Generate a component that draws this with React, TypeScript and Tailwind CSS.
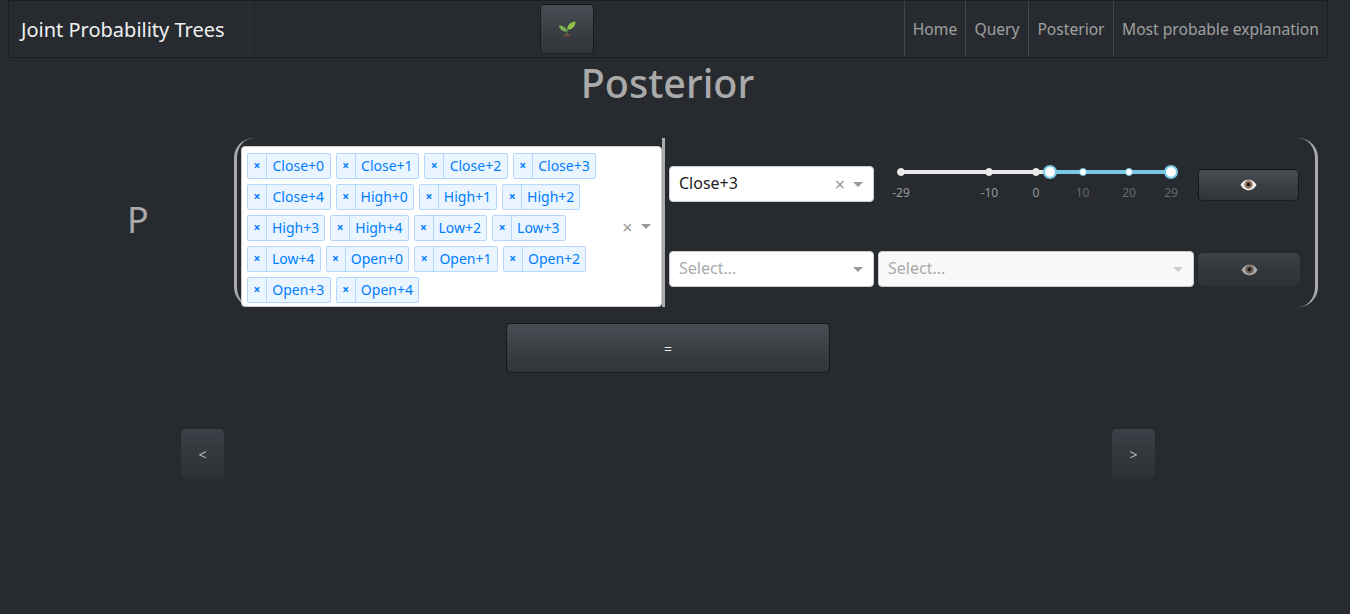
const font = "font-['Noto_Sans',sans-serif]"

const tags = [
  'Close+0', 'Close+1', 'Close+2', 'Close+3', 'Close+4',
  'High+0', 'High+1', 'High+2', 'High+3', 'High+4',
  'Low+2', 'Low+3', 'Low+4',
  'Open+0', 'Open+1', 'Open+2', 'Open+3', 'Open+4',
]

const links = [
  { label: 'Home', cls: 'w-[61px]' },
  { label: 'Query', cls: 'w-[63px]' },
  { label: 'Posterior', cls: 'w-[85px]' },
  { label: 'Most probable explanation', cls: 'flex-1' },
]

// slider scale runs from -29 to 29 over 270px
const marks = [-29, -10, 0, 10, 20, 29]
const low = 3
const toX = (v: number) => ((v + 29) / 58) * 270

function Caret({ light }: { light?: boolean }) {
  return (
    <span className={`w-0 h-0 border-x-[5px] border-x-transparent border-t-[5px] ${light ? 'border-t-[#ccc]' : 'border-t-[#999]'}`} />
  )
}

function Seedling() {
  return (
    <svg width="18" height="18" viewBox="0 0 18 18">
      <path d="M5 15.500c0-1 1.800-1.500 4-1.500s4 .5 4 1.500-1.800 1-4 1-4 0-4-1z" fill="#6b4a3a" />
      <path d="M8.600 14.500c0-3 .1-5 .9-7l.8.300c-.8 2-.8 3.800-.8 6.700z" fill="#5c913b" />
      <path d="M9 11.500C8.500 8 5.500 5.500 1 5.500 1.500 9.500 5 12 9 11.500z" fill="#77b255" />
      <path d="M9.500 9.500C9 5 12.500 1.800 17.500 1.500 17.500 6.500 14 10 9.500 9.500z" fill="#8fc24a" />
    </svg>
  )
}

function Eye() {
  return (
    <svg width="17" height="12" viewBox="0 0 17 12">
      <path d="M.5 6C3 2 5.500.8 8.500.8S14 2 16.500 6c-2.500 4-5 5.200-8 5.200S3 10 .5 6z" fill="#f1f1f1" />
      <circle cx="8.500" cy="5.500" r="4.300" fill="#9c7a60" />
      <circle cx="8.500" cy="5.500" r="1.900" fill="#1a1a1a" />
    </svg>
  )
}

function Tag({ label }: { label: string }) {
  const pad = label.startsWith('Close') ? 'px-[5.5px]' : label.startsWith('Open') ? 'px-[5.25px]' : 'px-[5px]'
  return (
    <div className="flex h-[26px] ml-[5px] mt-[5px] rounded-[2px] border border-[#b3d7ff] bg-[#ebf5ff] text-[#007eff] text-[14px] leading-[24px]">
      <span className="w-[19px] flex items-center justify-center border-r border-[#b3d7ff] text-[12px] font-bold">×</span>
      <span className={pad}>{label}</span>
    </div>
  )
}

function GradientButton({ className, children }: { className: string; children?: React.ReactNode }) {
  return (
    <button className={`flex items-center justify-center rounded-[5px] bg-gradient-to-b from-[#484e55] via-[#3a3f44] to-[#313539] ${className}`}>
      {children}
    </button>
  )
}

export default function App() {
  return (
    <div className={`min-h-screen bg-[#272b30] ${font} overflow-hidden`}>
      {/* Navbar */}
      <nav className="ml-2 w-[1320px] h-[58px] flex border border-[#1c1e22]">
        <div className="w-[241px] flex items-center pl-3 pt-[2px] border-r border-[#2f3338] text-[#f0f0f0] text-[20px]">
          Joint Probability Trees
        </div>
        <div className="flex-1 flex items-start pt-[3px] pl-[290px]">
          <GradientButton className="w-[54px] h-[50px] border border-black/60">
            <Seedling />
          </GradientButton>
        </div>
        <div className="w-[423px] flex text-[#a0a0a0] text-[15.6px]">
          {links.map((l) => (
            <div key={l.label} className={`${l.cls} flex items-center justify-center pt-[1px] border-l border-[#43474c]`}>
              {l.label}
            </div>
          ))}
        </div>
      </nav>

      <h1 className="h-[50px] mr-[15px] text-center text-[#aaaaaa] text-[39.5px] font-medium leading-[50px]">Posterior</h1>

      {/* Query row */}
      <div className="mt-[30px] flex h-[169px]">
        <div className="w-[234px] pl-[127px] pt-[52px] text-[#aaaaaa] text-[36px] leading-[60px]">P</div>

        <div className="w-[431px] rounded-l-[20px] border-l-[3px] border-r-[3px] border-[#aaaaaa] py-2 pl-1">
          <div className="w-[421px] h-[161px] flex items-center bg-white rounded-[4px] border border-[#ccc]">
            <div className="w-[375px] flex flex-wrap items-start content-start pb-[2px]">
              {tags.map((t) => <Tag key={t} label={t} />)}
            </div>
            <span className="ml-[2px] w-[17px] text-center text-[#999] text-[18px] leading-none">×</span>
            <span className="ml-[5px] flex"><Caret /></span>
          </div>
        </div>

        <div className="w-[653px] rounded-r-[20px] border-r-[3px] border-[#aaaaaa] pl-1 pt-[28px]">
          <div className="flex items-start">
            <div className="w-[205px] h-[36px] flex items-center bg-white rounded-[4px] border border-[#ccc] pl-[9px] pr-[10px] pb-[2px] text-[16px] text-[#222]">
              <span className="flex-1">Close+3</span>
              <span className="text-[#999] text-[18px] leading-none mr-[8px] mt-[2px]">×</span>
              <span className="flex mt-[2px]"><Caret /></span>
            </div>
            <div className="relative w-[270px] h-[36px] ml-[27px]">
              <div className="absolute left-0 top-[4px] w-full h-[4px] rounded-full bg-[#e9e9e9]" />
              <div className="absolute top-[4px] h-[4px] bg-[#78c8e6]" style={{ left: toX(low), right: 0 }} />
              {marks.map((m) => (
                <span key={m}>
                  <span
                    className={`absolute top-[2px] w-[8px] h-[8px] -ml-[4px] rounded-full border ${m >= low ? 'bg-white border-[#78c8e6]' : 'bg-[#e9e9e9] border-[#e9e9e9]'}`}
                    style={{ left: toX(m) }}
                  />
                  <span
                    className={`absolute top-[20px] -translate-x-1/2 text-[12px] leading-[14px] ${m <= 0 ? 'text-[#999]' : 'text-[#666]'}`}
                    style={{ left: toX(m) }}
                  >
                    {m}
                  </span>
                </span>
              ))}
              {[low, 29].map((v) => (
                <span
                  key={v}
                  className="absolute -top-[1px] w-[14px] h-[14px] -ml-[7px] rounded-full bg-white border-2 border-[#78c8e6]"
                  style={{ left: toX(v) }}
                />
              ))}
            </div>
            <GradientButton className="w-[101px] h-[32px] ml-[27px] mt-[3px] border border-black/60">
              <Eye />
            </GradientButton>
          </div>

          <div className="flex items-start mt-[49px]">
            <div className="w-[205px] h-[36px] flex items-center bg-white rounded-[4px] border border-[#ccc] pl-[9px] pr-[10px] text-[16px] text-[#aaa]">
              <span className="flex-1 pb-[2px]">Select...</span>
              <Caret />
            </div>
            <div className="w-[316px] h-[36px] ml-[4px] flex items-center bg-[#f9f9f9] rounded-[4px] border border-[#ccc] pl-[9px] pr-[10px] text-[16px] text-[#aaa]">
              <span className="flex-1 pb-[2px]">Select...</span>
              <Caret light />
            </div>
            <GradientButton className="w-[102px] h-[33px] ml-[4px] mt-[2px] opacity-65">
              <Eye />
            </GradientButton>
          </div>
        </div>
      </div>

      <div className="mt-4 flex">
        <GradientButton className="w-[324px] h-[50px] ml-[506px] border border-black/60 text-[#f0f0f0] text-[14px]">=</GradientButton>
      </div>

      <div className="mt-[56px] flex ml-[181px] w-[974px] justify-between">
        <GradientButton className="w-[43px] h-[50px] opacity-65 text-white text-[14px]">{'<'}</GradientButton>
        <GradientButton className="w-[43px] h-[50px] opacity-65 text-white text-[14px]">{'>'}</GradientButton>
      </div>
    </div>
  )
}
